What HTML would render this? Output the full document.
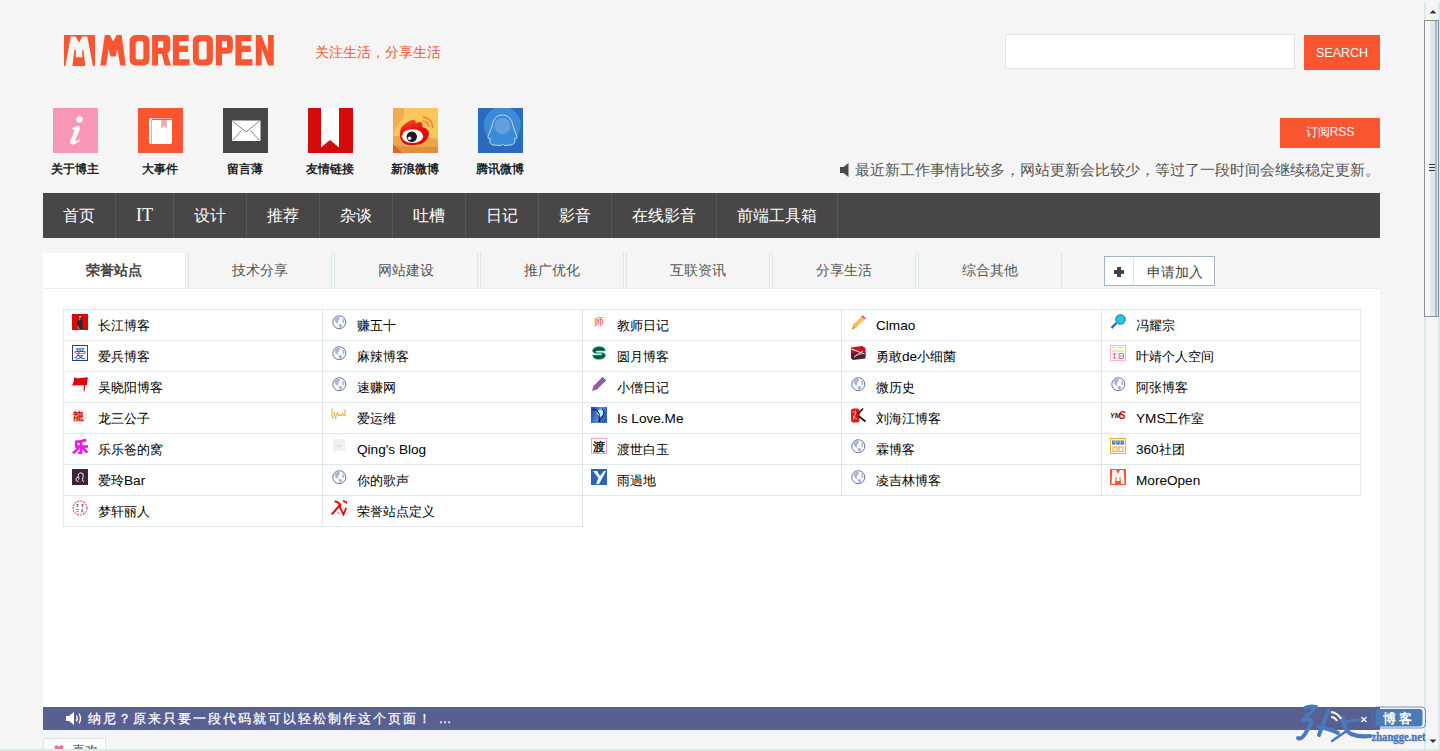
<!DOCTYPE html><html><head><meta charset="utf-8"><title>MoreOpen</title><style>
*{margin:0;padding:0;box-sizing:border-box}
html,body{width:1440px;height:751px;overflow:hidden}
body{background:#f5f5f5;font-family:"Liberation Sans",sans-serif;color:#333;position:relative}
.a{position:absolute}
.t{position:absolute;white-space:nowrap;line-height:1}
.nav{position:absolute;left:43px;top:193px;width:1337px;height:45px;background:#484646}
.ni{position:absolute;top:0;height:45px;border-right:1px solid #595757;color:#fff;font-size:16px;line-height:45px;text-align:center}
.tab{position:absolute;top:253px;height:35px;background:#f5f5f5;border-left:1px solid #d9e7e7;border-right:1px solid #d9e7e7;color:#555;font-size:14px;line-height:35px;text-align:center}
.cell{position:absolute;height:32px;border:1px solid #dde9ea}
.cell .ic{position:absolute;left:8px;top:4px;width:16px;height:16px}
.cell .tx{position:absolute;left:34px;top:1px;line-height:30px;font-size:13px;color:#000;white-space:nowrap}
.la{font-size:13.6px}
.lbl{position:absolute;top:162px;width:85px;text-align:center;font-size:12px;font-weight:bold;color:#222;line-height:14px}
</style></head><body>
<svg class="a" style="left:0;top:0" width="300" height="80" viewBox="0 0 300 80">
<rect x="64" y="35" width="31" height="31" fill="#f95530"/>
<path fill="#f5f5f5" d="M70.9 36.5H75.4L79 42.6L82.5 36.5H87.3L92.9 66H85.3L83.5 50L82.3 50V57.3H75.9V50L74.4 50L72.4 66H65.3Z"/>
<g fill="#f95530">
<path d="M104.8 35.1H109.85L113.3 41.5L116.5 35.1H121.6L125.8 65.4H120.2L117.3 48.9L115.7 56.4H110.4L108.5 48.9L106.1 65.4H100.3Z"/>
<path fill-rule="evenodd" d="M136 35H143.1Q149.5 35 149.5 41.5V59Q149.5 65.5 143.1 65.5H136Q129.6 65.5 129.6 59V41.5Q129.6 35 136 35ZM137.5 41.2Q135.7 41.2 135.7 43V57.8Q135.7 59.6 137.5 59.6H141.6Q143.4 59.6 143.4 57.8V43Q143.4 41.2 141.6 41.2Z"/>
<path fill-rule="evenodd" d="M152.1 35H165Q170.4 35 170.4 40.5V48Q170.4 52 167.2 53.2L171 65.5H164.8L161.8 54H158V65.5H152.1ZM158 41.2V47.8H163.3V41.2Z"/>
<path d="M172.9 35H188.75V41.25H179.2V45.8H188V52H179.2V59.2H189.6V65.5H172.9Z"/>
<path fill-rule="evenodd" d="M199.3 35H206.5Q212.9 35 212.9 41.5V59Q212.9 65.5 206.5 65.5H199.3Q192.9 65.5 192.9 59V41.5Q192.9 35 199.3 35ZM200.55 41.25Q198.75 41.25 198.75 43V57.8Q198.75 59.6 200.55 59.6H204.9Q206.7 59.6 206.7 57.8V43Q206.7 41.25 204.9 41.25Z"/>
<path fill-rule="evenodd" d="M215.8 35H227.5Q232.9 35 232.9 40.5V48.5Q232.9 53.75 227.5 53.75H222V65.5H215.8ZM222 41.25V47.5H227V41.25Z"/>
<path d="M235.4 35H251.6V41.25H241.7V45.8H250.8V52H241.7V59.2H252.5V65.5H235.4Z"/>
<path d="M255.8 35H261.3L268 52V35H273.75V65.5H268.3L261.7 48.5V65.5H255.8Z"/>
</g></svg>
<div class="t" style="left:315px;top:45px;font-size:14px;color:#f95530">关注生活，分享生活</div>
<div class="a" style="left:1005px;top:34px;width:290px;height:35px;background:#fff;border:1px solid #d8e8e8"></div>
<div class="a" style="left:1304px;top:35px;width:76px;height:35px;background:#f95530;color:#fff;font-size:12.5px;line-height:37px;text-align:center">SEARCH</div>
<div class="a" style="left:1280px;top:118px;width:100px;height:30px;background:#f95530;color:#fff;font-size:12px;line-height:28px;text-align:center">订阅RSS</div>
<svg class="a" style="left:839px;top:163px" width="10" height="14" viewBox="0 0 10 14"><path d="M1 4H4.5L9.5 0V14L4.5 10H1Z" fill="#4a4a4a"/></svg>
<div class="t" style="left:855px;top:162px;font-size:15px;color:#555">最近新工作事情比较多，网站更新会比较少，等过了一段时间会继续稳定更新。</div>
<svg class="a" style="left:53px;top:108px" width="45" height="45" viewBox="0 0 45 45"><rect width="45" height="45" fill="#f896b6"/><circle cx="26.5" cy="11.5" r="3.2" fill="#fff"/><path d="M19 20.5Q24 17 26.5 18.5Q27.5 19.5 26.5 22L22.5 32Q22 34 24 33L27 31L26.5 33Q21 37.5 18.5 36Q16.5 35 17.5 32.5L21.5 22.5Q22 21 20 22Z" fill="#fff"/></svg>
<div class="lbl" style="left:32px">关于博主</div>
<svg class="a" style="left:138px;top:108px" width="45" height="45" viewBox="0 0 45 45"><rect width="45" height="45" fill="#f95530"/><rect x="11" y="10" width="23" height="26" rx="2" fill="#fff"/><rect x="13" y="12" width="1" height="24" fill="#f7a7a0"/><path d="M14 10.5H33.5V12H14Z" fill="#f95530"/><path d="M22 12H30V23L26 19.5L22 23Z" fill="#fff"/><path d="M23.2 12H28.8V20.5L26 18L23.2 20.5Z" fill="#f8a8a8"/></svg>
<div class="lbl" style="left:117px">大事件</div>
<svg class="a" style="left:223px;top:108px" width="45" height="45" viewBox="0 0 45 45"><rect width="45" height="45" fill="#474546"/><rect x="9" y="12.5" width="28.5" height="20.5" fill="#fff"/><path d="M9.5 13L23 24L36.5 13M9.5 32.5L18.5 22.5M36.5 32.5L27.5 22.5" stroke="#556699" stroke-width="0.8" fill="none"/></svg>
<div class="lbl" style="left:202px">留言薄</div>
<svg class="a" style="left:308px;top:108px" width="45" height="45" viewBox="0 0 45 45"><rect width="45" height="45" fill="#d50a0a"/><path d="M13 0H31V39.5L22 32L13 39.5Z" fill="#fff"/></svg>
<div class="lbl" style="left:287px">友情链接</div>
<svg class="a" style="left:393px;top:108px" width="45" height="45" viewBox="0 0 45 45"><defs><linearGradient id="wr" x1="0" y1="0" x2="0.4" y2="1"><stop offset="0" stop-color="#f55a2a"/><stop offset="0.5" stop-color="#e41414"/><stop offset="1" stop-color="#dc0c0c"/></linearGradient></defs><rect width="45" height="45" fill="#fbc75a"/><path d="M0 0H11Q13 8 7 14Q2 20 0 28Z" fill="#f2ab55"/><path d="M0 28Q20 26 45 31V45H0Z" fill="#eea54f"/><path d="M0 38Q22 39 45 39V45H0Z" fill="#e48d3a"/><path d="M0 36L9 45H0Z" fill="#f05a28"/><path d="M7 27Q6 19 14 14.5Q19 11 21.5 12Q23.5 13.5 22.5 15.5Q27 13 29 15Q30 17 29 19Q35 20 36 25Q36 32 28 36Q20 38 13 36.5Q7 34 7 27Z" fill="url(#wr)"/><ellipse cx="19.5" cy="28.2" rx="10.6" ry="6.9" fill="#fff"/><circle cx="18.8" cy="28.8" r="5.2" fill="#1a1a22"/><circle cx="16.6" cy="30.2" r="1.7" fill="#fff"/><path d="M29.5 9Q39 10 40 20M29.5 13Q35 13.5 36 19" stroke="#e8923a" stroke-width="2.2" fill="none"/></svg>
<div class="lbl" style="left:372px">新浪微博</div>
<svg class="a" style="left:478px;top:108px" width="45" height="45" viewBox="0 0 45 45"><rect width="45" height="45" fill="#2a6bbd"/><circle cx="24.3" cy="17" r="18.5" fill="#3b8bd8"/><path d="M24.5 7C31 7 34 12 35 18C36 22 38 25 39 29C39 31 37.5 31.5 36.5 30.5C37.5 33 37 36 33 37L26 37.5L24.5 36L23 37.5L15 37C11 36 11.5 33 12.5 30.5C11 31.5 9.5 30.5 10 28.5C11 25 13 22 14 18C15 12 18 7 24.5 7Z" fill="#3b8bd8" stroke="#d8e0ea" stroke-width="0.9"/><circle cx="24.5" cy="18" r="8" fill="#6aa2e0" opacity="0.85"/></svg>
<div class="lbl" style="left:457px">腾讯微博</div>
<div class="nav">
<div class="ni" style="left:0px;width:73px">首页</div>
<div class="ni" style="left:73px;width:58px;font-family:'Liberation Serif',serif;font-size:18px">IT</div>
<div class="ni" style="left:131px;width:73px">设计</div>
<div class="ni" style="left:204px;width:73px">推荐</div>
<div class="ni" style="left:277px;width:73px">杂谈</div>
<div class="ni" style="left:350px;width:73px">吐槽</div>
<div class="ni" style="left:423px;width:73px">日记</div>
<div class="ni" style="left:496px;width:73px">影音</div>
<div class="ni" style="left:569px;width:105px">在线影音</div>
<div class="ni" style="left:674px;width:121px">前端工具箱</div>
</div>
<div class="tab" style="left:43px;width:143px;background:#fff;border-left:0;font-weight:bold;color:#444">荣誉站点</div>
<div class="tab" style="left:188px;width:144px">技术分享</div>
<div class="tab" style="left:334px;width:144px">网站建设</div>
<div class="tab" style="left:480px;width:144px">推广优化</div>
<div class="tab" style="left:626px;width:144px">互联资讯</div>
<div class="tab" style="left:772px;width:144px">分享生活</div>
<div class="tab" style="left:918px;width:144px">综合其他</div>
<div class="a" style="left:43px;top:288px;width:1337px;height:1px;background:#eef0f0"></div>
<div class="a" style="left:1104px;top:256px;width:111px;height:30px;background:#fff;border:1px solid #a3b3c9"></div>
<div class="a" style="left:1133px;top:258px;width:1px;height:27px;background:#d9e8e8"></div>
<svg class="a" style="left:1114px;top:267px" width="10" height="10" viewBox="0 0 10 10"><path d="M3 0H7V3H10V7H7V10H3V7H0V3H3Z" fill="#444"/></svg>
<div class="t" style="left:1147px;top:266px;font-size:13.5px;color:#444">申请加入</div>
<div class="a" style="left:43px;top:289px;width:1337px;height:418px;background:#fff"></div>
<div class="cell" style="left:63px;top:309px;width:260px"><div class="ic"><svg width="16" height="16" viewBox="0 0 16 16"><rect width="16" height="16" fill="#dc0808"/><path d="M6.5 1.5Q8.5 0.8 9.5 2Q9.5 3.5 9 4.5Q10.5 6 10.5 9Q10.5 12 11 15H5.5Q6 12 5.5 10.5Q4.5 9.5 5.5 7.5Q6.5 5.5 7 4.5Q6 3 6.5 1.5Z" fill="#2a2a30"/><circle cx="8" cy="2.8" r="1" fill="#e8e8f0"/><path d="M7 4.5Q8 4.5 8.5 5.5L7.5 6.5ZM5.5 11Q6.5 13 7.5 15H6Z" fill="#f0b040"/></svg></div><div class="tx">长江博客</div></div>
<div class="cell" style="left:63px;top:340px;width:260px"><div class="ic"><svg width="16" height="16" viewBox="0 0 16 16"><rect x="0.5" y="0.5" width="15" height="15" fill="#fff" stroke="#2040a0"/><text x="8" y="13" font-size="12" text-anchor="middle" fill="#2040a0" font-family="Liberation Serif">爱</text></svg></div><div class="tx">爱兵博客</div></div>
<div class="cell" style="left:63px;top:371px;width:260px"><div class="ic"><svg width="16" height="16" viewBox="0 0 16 16"><path d="M2.2 1.2Q5 3 8 2L15.8 1.2L15 9H13.5L12.5 15.5H11.5L12 9.2L0 9.5Q2 7 2.2 1.2Z" fill="#dc0808"/></svg></div><div class="tx">吴晓阳博客</div></div>
<div class="cell" style="left:63px;top:402px;width:260px"><div class="ic"><svg width="16" height="16" viewBox="0 0 16 16"><circle cx="10" cy="8.5" r="5" fill="none" stroke="#f8d0b0" stroke-width="0.7"/><text x="6.5" y="12.5" font-size="11" text-anchor="middle" fill="#d01010" font-weight="bold">龍</text></svg></div><div class="tx">龙三公子</div></div>
<div class="cell" style="left:63px;top:433px;width:260px"><div class="ic"><svg width="16" height="16" viewBox="0 0 16 16"><text x="8" y="14" font-size="15" text-anchor="middle" fill="#f018e8" stroke="#f018e8" stroke-width="0.8" font-weight="bold">乐</text></svg></div><div class="tx">乐乐爸的窝</div></div>
<div class="cell" style="left:63px;top:464px;width:260px"><div class="ic"><svg width="16" height="16" viewBox="0 0 16 16"><rect width="16" height="16" fill="#3e2438"/><path d="M6.5 12.5Q3.5 12.5 4 9.8Q4.5 7.8 6.5 8.2Q8 9 6.5 10.8M6.5 8.2Q5.5 4 8.8 3.8Q12 3.8 11.2 7.5Q10.2 10.5 10.6 12Q11 13 12.2 12.2" stroke="#fff" stroke-width="0.9" fill="none"/></svg></div><div class="tx">爱玲<span class="la">Bar</span></div></div>
<div class="cell" style="left:63px;top:495px;width:260px"><div class="ic"><svg width="16" height="16" viewBox="0 0 16 16"><circle cx="8" cy="8" r="7" fill="#fff" stroke="#f05068" stroke-width="1.2" stroke-dasharray="2 1"/><path d="M4 5H7M5.5 4V7M9 5H12M10.5 4V7.5M4 9.5H7M4.5 11.5H6.5M9.5 9.5L11.5 12.5M11 9L9 12.5" stroke="#555" stroke-width="0.7"/></svg></div><div class="tx">梦轩丽人</div></div>
<div class="cell" style="left:322px;top:309px;width:261px"><div class="ic"><svg width="16" height="16" viewBox="0 0 16 16"><g transform="translate(-0.7 -0.8)"><circle cx="9" cy="9" r="6.5" fill="#fbfcff" stroke="#67719f" stroke-width="1"/><path d="M4.3 6Q6 3.3 9.5 3.6Q10 5.5 8.5 7Q7.5 7.5 7.5 9Q8.5 10 7.5 10.5Q6 10 5 8.5Q4.5 7.5 4.3 6Z" fill="#a7b5d8"/><path d="M8.3 11Q11 10.5 12 12Q11.5 14 10 15Q8.5 14 8.3 11Z" fill="#a7b5d8"/><path d="M12 4.5Q14 6 14 8.5Q13.5 10 12.5 10Q12 7.5 12 4.5Z" fill="#a7b5d8"/></g></svg></div><div class="tx">赚五十</div></div>
<div class="cell" style="left:322px;top:340px;width:261px"><div class="ic"><svg width="16" height="16" viewBox="0 0 16 16"><g transform="translate(-0.7 -0.8)"><circle cx="9" cy="9" r="6.5" fill="#fbfcff" stroke="#67719f" stroke-width="1"/><path d="M4.3 6Q6 3.3 9.5 3.6Q10 5.5 8.5 7Q7.5 7.5 7.5 9Q8.5 10 7.5 10.5Q6 10 5 8.5Q4.5 7.5 4.3 6Z" fill="#a7b5d8"/><path d="M8.3 11Q11 10.5 12 12Q11.5 14 10 15Q8.5 14 8.3 11Z" fill="#a7b5d8"/><path d="M12 4.5Q14 6 14 8.5Q13.5 10 12.5 10Q12 7.5 12 4.5Z" fill="#a7b5d8"/></g></svg></div><div class="tx">麻辣博客</div></div>
<div class="cell" style="left:322px;top:371px;width:261px"><div class="ic"><svg width="16" height="16" viewBox="0 0 16 16"><g transform="translate(-0.7 -0.8)"><circle cx="9" cy="9" r="6.5" fill="#fbfcff" stroke="#67719f" stroke-width="1"/><path d="M4.3 6Q6 3.3 9.5 3.6Q10 5.5 8.5 7Q7.5 7.5 7.5 9Q8.5 10 7.5 10.5Q6 10 5 8.5Q4.5 7.5 4.3 6Z" fill="#a7b5d8"/><path d="M8.3 11Q11 10.5 12 12Q11.5 14 10 15Q8.5 14 8.3 11Z" fill="#a7b5d8"/><path d="M12 4.5Q14 6 14 8.5Q13.5 10 12.5 10Q12 7.5 12 4.5Z" fill="#a7b5d8"/></g></svg></div><div class="tx">速赚网</div></div>
<div class="cell" style="left:322px;top:402px;width:261px"><div class="ic"><svg width="16" height="16" viewBox="0 0 16 16"><g stroke="#f0a020" stroke-width="1" fill="none"><path d="M1 1.5V9Q1 12 3 10"/><path d="M3 5Q3.5 10 5 9.5Q6 9 6.5 5M5 9.5L4.5 12"/><path d="M7 6Q7.5 10 8.5 9Q9.5 6 10 9Q11 10 11.5 6"/><path d="M12 7Q12.5 9.5 14 8.5V2"/></g></svg></div><div class="tx">爱运维</div></div>
<div class="cell" style="left:322px;top:433px;width:261px"><div class="ic"><svg width="16" height="16" viewBox="0 0 16 16"><rect x="2" y="1" width="12" height="12" fill="#edf1f4"/><path d="M6 7L8 9L10 7" stroke="#c8d0d8" fill="none"/></svg></div><div class="tx"><span class="la">Qing's Blog</span></div></div>
<div class="cell" style="left:322px;top:464px;width:261px"><div class="ic"><svg width="16" height="16" viewBox="0 0 16 16"><g transform="translate(-0.7 -0.8)"><circle cx="9" cy="9" r="6.5" fill="#fbfcff" stroke="#67719f" stroke-width="1"/><path d="M4.3 6Q6 3.3 9.5 3.6Q10 5.5 8.5 7Q7.5 7.5 7.5 9Q8.5 10 7.5 10.5Q6 10 5 8.5Q4.5 7.5 4.3 6Z" fill="#a7b5d8"/><path d="M8.3 11Q11 10.5 12 12Q11.5 14 10 15Q8.5 14 8.3 11Z" fill="#a7b5d8"/><path d="M12 4.5Q14 6 14 8.5Q13.5 10 12.5 10Q12 7.5 12 4.5Z" fill="#a7b5d8"/></g></svg></div><div class="tx">你的歌声</div></div>
<div class="cell" style="left:322px;top:495px;width:261px"><div class="ic"><svg width="16" height="16" viewBox="0 0 16 16"><g stroke="#e00808" fill="none" stroke-linecap="round"><path d="M1.2 13.8L9.5 4.5" stroke-width="2"/><path d="M4.3 1.5Q9.5 2.5 9 7.5L12.5 14.5L15 8.5" stroke-width="1.8"/><path d="M12.8 1L15.8 2.8" stroke-width="1.8"/><path d="M7 13.2L8 13" stroke-width="1"/></g></svg></div><div class="tx">荣誉站点定义</div></div>
<div class="cell" style="left:582px;top:309px;width:260px"><div class="ic"><svg width="16" height="16" viewBox="0 0 16 16"><text x="8" y="11" font-size="10" text-anchor="middle" fill="#f03838">师</text></svg></div><div class="tx">教师日记</div></div>
<div class="cell" style="left:582px;top:340px;width:260px"><div class="ic"><svg width="16" height="16" viewBox="0 0 16 16"><path d="M8 1.5Q14 1.5 14.5 6H5Q4.5 7.5 6 7.5H11Q15 8 14.5 11Q13 14.5 8 14.5Q2 14.5 1.5 10H11Q11.5 8.5 10 8.5H5Q1 8 1.5 5Q3 1.5 8 1.5Z" fill="#0c5a2c" stroke="#30d8d0" stroke-width="0.6"/></svg></div><div class="tx">圆月博客</div></div>
<div class="cell" style="left:582px;top:371px;width:260px"><div class="ic"><svg width="16" height="16" viewBox="0 0 16 16"><path d="M1 15L2.5 10L11.5 1L15 4.5L6 13.5Z" fill="#9a5aa0"/><path d="M11.5 1L15 4.5L13.5 6L10 2.5Z" fill="#6a6aa0"/></svg></div><div class="tx">小僧日记</div></div>
<div class="cell" style="left:582px;top:402px;width:260px"><div class="ic"><svg width="16" height="16" viewBox="0 0 16 16"><defs><linearGradient id="ilg" x1="0" y1="0" x2="1" y2="0.3"><stop offset="0" stop-color="#1040a8"/><stop offset="0.6" stop-color="#5a90d8"/><stop offset="1" stop-color="#2a60c0"/></linearGradient></defs><rect width="16" height="16" fill="url(#ilg)"/><ellipse cx="9.5" cy="6" rx="3" ry="3.5" fill="#b8f0f8"/><path d="M1.5 3Q4 1 7 4.5Q9 7 8 10L9 15M7 15Q12 11 13 6Q13 3 11 2" stroke="#111" stroke-width="1" fill="none"/></svg></div><div class="tx"><span class="la">Is Love.Me</span></div></div>
<div class="cell" style="left:582px;top:433px;width:260px"><div class="ic"><svg width="16" height="16" viewBox="0 0 16 16"><rect x="0.5" y="0.5" width="15" height="15" fill="#fff" stroke="#f0a0b8"/><text x="8" y="13" font-size="12" text-anchor="middle" fill="#222" font-weight="bold">渡</text></svg></div><div class="tx">渡世白玉</div></div>
<div class="cell" style="left:582px;top:464px;width:260px"><div class="ic"><svg width="16" height="16" viewBox="0 0 16 16"><rect width="16" height="16" fill="#2a66b8"/><path d="M2 2H6L9 7L13 2H15L8 15H5L7.5 9Z" fill="#fff"/></svg></div><div class="tx">雨過地</div></div>
<div class="cell" style="left:841px;top:309px;width:261px"><div class="ic"><svg width="16" height="16" viewBox="0 0 16 16"><path d="M2 15L3 11L11.5 2.5L14.5 5.5L6 14Z" fill="#f5b43c"/><path d="M4.5 12L12.5 4M6 13.2L13.5 5.3" stroke="#fff3c0" stroke-width="0.5"/><path d="M11.5 2.5L12.8 1.2L15.8 4.2L14.5 5.5Z" fill="#f04a78"/><path d="M2 15L2.8 12.3L4.7 14.2Z" fill="#e8963a"/><path d="M2 15L2.3 14L3 14.7Z" fill="#224"/></svg></div><div class="tx"><span class="la">Clmao</span></div></div>
<div class="cell" style="left:841px;top:340px;width:261px"><div class="ic"><svg width="16" height="16" viewBox="0 0 16 16"><path d="M1 2.5L12 1L15.5 3V11L1 13Z" fill="#d0101c"/><path d="M1 8Q8 7 15.5 7.5V13.5L3 15L1 13Z" fill="#4a2040"/><path d="M1.5 4L14.5 9M4 12L13 6" stroke="#fff" stroke-width="1"/><path d="M6 10L12 9" stroke="#e8b040" stroke-width="0.8"/></svg></div><div class="tx">勇敢<span class="la">de</span>小细菌</div></div>
<div class="cell" style="left:841px;top:371px;width:261px"><div class="ic"><svg width="16" height="16" viewBox="0 0 16 16"><g transform="translate(-0.7 -0.8)"><circle cx="9" cy="9" r="6.5" fill="#fbfcff" stroke="#67719f" stroke-width="1"/><path d="M4.3 6Q6 3.3 9.5 3.6Q10 5.5 8.5 7Q7.5 7.5 7.5 9Q8.5 10 7.5 10.5Q6 10 5 8.5Q4.5 7.5 4.3 6Z" fill="#a7b5d8"/><path d="M8.3 11Q11 10.5 12 12Q11.5 14 10 15Q8.5 14 8.3 11Z" fill="#a7b5d8"/><path d="M12 4.5Q14 6 14 8.5Q13.5 10 12.5 10Q12 7.5 12 4.5Z" fill="#a7b5d8"/></g></svg></div><div class="tx">微历史</div></div>
<div class="cell" style="left:841px;top:402px;width:261px"><div class="ic"><svg width="16" height="16" viewBox="0 0 16 16"><rect x="1" y="1.5" width="8.5" height="14" rx="2.5" fill="#e01818"/><path d="M3 4L4 6M5.5 3.5V8M3 9L7 12M6 5L3 13" stroke="#f8c8a0" stroke-width="0.8"/><path d="M8 7L13 1.5M8.5 9L15.5 14.5" stroke="#111" stroke-width="1.6"/></svg></div><div class="tx">刘海江博客</div></div>
<div class="cell" style="left:841px;top:433px;width:261px"><div class="ic"><svg width="16" height="16" viewBox="0 0 16 16"><g transform="translate(-0.7 -0.8)"><circle cx="9" cy="9" r="6.5" fill="#fbfcff" stroke="#67719f" stroke-width="1"/><path d="M4.3 6Q6 3.3 9.5 3.6Q10 5.5 8.5 7Q7.5 7.5 7.5 9Q8.5 10 7.5 10.5Q6 10 5 8.5Q4.5 7.5 4.3 6Z" fill="#a7b5d8"/><path d="M8.3 11Q11 10.5 12 12Q11.5 14 10 15Q8.5 14 8.3 11Z" fill="#a7b5d8"/><path d="M12 4.5Q14 6 14 8.5Q13.5 10 12.5 10Q12 7.5 12 4.5Z" fill="#a7b5d8"/></g></svg></div><div class="tx">霖博客</div></div>
<div class="cell" style="left:841px;top:464px;width:261px"><div class="ic"><svg width="16" height="16" viewBox="0 0 16 16"><g transform="translate(-0.7 -0.8)"><circle cx="9" cy="9" r="6.5" fill="#fbfcff" stroke="#67719f" stroke-width="1"/><path d="M4.3 6Q6 3.3 9.5 3.6Q10 5.5 8.5 7Q7.5 7.5 7.5 9Q8.5 10 7.5 10.5Q6 10 5 8.5Q4.5 7.5 4.3 6Z" fill="#a7b5d8"/><path d="M8.3 11Q11 10.5 12 12Q11.5 14 10 15Q8.5 14 8.3 11Z" fill="#a7b5d8"/><path d="M12 4.5Q14 6 14 8.5Q13.5 10 12.5 10Q12 7.5 12 4.5Z" fill="#a7b5d8"/></g></svg></div><div class="tx">凌吉林博客</div></div>
<div class="cell" style="left:1101px;top:309px;width:260px"><div class="ic"><svg width="16" height="16" viewBox="0 0 16 16"><circle cx="10.5" cy="5.5" r="4.8" fill="#1ec8e8" stroke="#1a4a80" stroke-width="0.8"/><path d="M1.5 14L6.5 9" stroke="#2a6ad0" stroke-width="2.4"/></svg></div><div class="tx">冯耀宗</div></div>
<div class="cell" style="left:1101px;top:340px;width:260px"><div class="ic"><svg width="16" height="16" viewBox="0 0 16 16"><rect x="0.5" y="0.5" width="15" height="15" fill="#fff" stroke="#f4b8c8"/><path d="M2 2.5H5M8 2.5H12M2 6H14" stroke="#f0c040" stroke-width="0.8"/><path d="M2.5 9H6.5M4.5 8V13M2.5 13H6.5" stroke="#e86060" stroke-width="0.9"/><path d="M9 8.5H13.5V13.5H9ZM9 11H13.5" stroke="#d05080" stroke-width="0.8" fill="none"/></svg></div><div class="tx">叶靖个人空间</div></div>
<div class="cell" style="left:1101px;top:371px;width:260px"><div class="ic"><svg width="16" height="16" viewBox="0 0 16 16"><g transform="translate(-0.7 -0.8)"><circle cx="9" cy="9" r="6.5" fill="#fbfcff" stroke="#67719f" stroke-width="1"/><path d="M4.3 6Q6 3.3 9.5 3.6Q10 5.5 8.5 7Q7.5 7.5 7.5 9Q8.5 10 7.5 10.5Q6 10 5 8.5Q4.5 7.5 4.3 6Z" fill="#a7b5d8"/><path d="M8.3 11Q11 10.5 12 12Q11.5 14 10 15Q8.5 14 8.3 11Z" fill="#a7b5d8"/><path d="M12 4.5Q14 6 14 8.5Q13.5 10 12.5 10Q12 7.5 12 4.5Z" fill="#a7b5d8"/></g></svg></div><div class="tx">阿张博客</div></div>
<div class="cell" style="left:1101px;top:402px;width:260px"><div class="ic"><svg width="16" height="16" viewBox="0 0 16 16"><text x="0" y="11" font-size="7" font-weight="bold" font-style="italic" fill="#111">YM</text><text x="9" y="12" font-size="10" font-weight="bold" font-style="italic" fill="#e01010">S</text></svg></div><div class="tx"><span class="la">YMS</span>工作室</div></div>
<div class="cell" style="left:1101px;top:433px;width:260px"><div class="ic"><svg width="16" height="16" viewBox="0 0 16 16"><rect x="0.5" y="0.5" width="15" height="15" fill="#fff8e0" stroke="#f0b030"/><rect x="2" y="2.5" width="3.5" height="4" fill="#3a72c8"/><rect x="6.25" y="2.5" width="3.5" height="4" fill="#3a72c8"/><rect x="10.5" y="2.5" width="3.5" height="4" fill="#3a72c8"/><path d="M3 4H4.5M7.25 4H8.75M11.5 4H13" stroke="#fff" stroke-width="0.8"/><rect x="3" y="9" width="4" height="4.5" fill="none" stroke="#e89030" stroke-width="0.8"/><rect x="9" y="9" width="4" height="4.5" fill="none" stroke="#e89030" stroke-width="0.8"/></svg></div><div class="tx"><span class="la">360</span>社团</div></div>
<div class="cell" style="left:1101px;top:464px;width:260px"><div class="ic"><svg width="16" height="16" viewBox="0 0 16 16"><rect width="16" height="16" fill="#f95530"/><path d="M2.5 1H6L8 5L10 1H13.5L14.5 15H11L10.5 8H5.5L5 15H1.5Z" fill="#fff"/><rect x="6.5" y="8" width="3" height="4" fill="#fff"/></svg></div><div class="tx"><span class="la">MoreOpen</span></div></div>
<div class="a" style="left:43px;top:707px;width:1337px;height:23px;background:#575f93"></div>
<svg class="a" style="left:66px;top:712px" width="17" height="13" viewBox="0 0 17 13"><path d="M0 4H3L8 0V13L3 9H0Z" fill="#fff"/><path d="M10.5 3.5Q12 6.5 10.5 9.5M13 1.5Q16 6.5 13 11.5" stroke="#fff" stroke-width="1.3" fill="none"/></svg>
<div class="t" style="left:88px;top:712px;font-size:13px;letter-spacing:2px;color:#fff;-webkit-text-stroke:0.25px #fff">纳尼？原来只要一段代码就可以轻松制作这个页面！ …</div>
<div class="a" style="left:43px;top:738px;width:63px;height:20px;background:#fff;border:1px solid #d8e8e8"></div>
<svg class="a" style="left:54px;top:745px" width="10" height="8" viewBox="0 0 10 8"><path d="M5 2Q3 -1 1 1Q-1 3 5 8Q11 3 9 1Q7 -1 5 2Z" fill="#f07090"/></svg>
<div class="t" style="left:72px;top:744px;font-size:13px;color:#444">喜欢</div>
<div class="a" style="left:1424px;top:0;width:16px;height:751px;background:#f5f5f5"></div>
<div class="a" style="left:1424px;top:2px;width:2px;height:747px;background:#dbe9e9"></div>
<div class="a" style="left:1438px;top:2px;width:2px;height:747px;background:#dbe9e9"></div>
<svg class="a" style="left:1429px;top:9px" width="8" height="5" viewBox="0 0 8 5"><path d="M0.5 4.5L4 1L7.5 4.5Z" fill="#333350"/></svg>
<div class="a" style="left:1424px;top:20px;width:15px;height:297px;border:1px solid #8e8e9a;background:linear-gradient(90deg,#f7f7f7 0,#f7f7f7 5px,#dbe9e9 5px,#dbe9e9 10px,#a9b6cf 10px,#a9b6cf 12px,#dbe9e9 12px)"></div>
<div class="a" style="left:1429px;top:164px;width:6px;height:1px;background:#334"></div>
<div class="a" style="left:1429px;top:167px;width:6px;height:1px;background:#334"></div>
<div class="a" style="left:1429px;top:170px;width:6px;height:1px;background:#334"></div>
<svg class="a" style="left:1429px;top:739px" width="8" height="5" viewBox="0 0 8 5"><path d="M0.5 0.5L4 4L7.5 0.5Z" fill="#333350"/></svg>
<div class="a" style="left:0;top:749px;width:1440px;height:2px;background:#dbe9e9"></div>
<svg class="a" style="left:1290px;top:700px" width="150" height="50" viewBox="0 0 150 50">
<g stroke="#4a7ab8" fill="none" stroke-linecap="round" stroke-linejoin="round">
<path d="M15 8Q20 5.5 26 7" stroke-width="4"/>
<path d="M25 8L13 20" stroke-width="3.5"/>
<path d="M13 20Q19 18 22 22L15 34Q11 40 8 38" stroke-width="4"/>
<path d="M38.5 10L29 35" stroke-width="4"/>
<path d="M29 27Q40 29 48 33" stroke-width="4"/>
<path d="M53 22Q62 21 72 19.5" stroke-width="2.5"/>
<path d="M52.5 17Q53.5 30 61 34Q70 37.5 80 36" stroke-width="4.2"/>
<path d="M42 41L58 30" stroke-width="2.5"/>
</g>
<path d="M41 12Q48 13 51 19M41 17Q45 17 47 21" stroke="#fff" stroke-width="1.8" fill="none"/>
<path d="M71.5 17L76.5 22M76.5 17L71.5 22" stroke="#fff" stroke-width="1.2"/>
<rect x="82.5" y="7" width="53" height="21" rx="4" fill="none" stroke="#4a7ab8" stroke-width="1" opacity="0.8"/>
<rect x="85.5" y="9" width="47" height="17.5" rx="3" fill="#4a7ab8"/>
<text x="109" y="22.5" font-size="12.5" text-anchor="middle" fill="#fff" font-weight="bold" font-family="Liberation Serif" letter-spacing="3">博客</text>
<text x="81.5" y="40.5" font-size="13.5" fill="#4a7ab8" stroke="#4a7ab8" stroke-width="0.5" font-weight="bold" font-family="Liberation Serif" textLength="54" lengthAdjust="spacingAndGlyphs">zhangge.net</text>
</svg>
</body></html>
